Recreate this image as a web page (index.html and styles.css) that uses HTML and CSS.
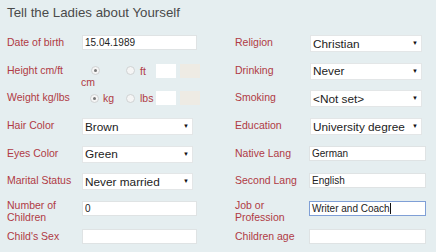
FILE: index.html
```html
<!DOCTYPE html>
<html>
<head>
    <meta charset="utf-8">
    <title>Tell the Ladies about Yourself</title>
<link rel="stylesheet" href="styles.css">
</head>
<body>
<div class="about-box">
    <h2 class="about-title">Tell the Ladies about Yourself</h2>
    <form class="about-form" name="about">
        <label class="lbl">Date of birth</label>
        <div class="fld"><input class="txt txt-left" type="text" value="15.04.1989"></div>
        <label class="lbl">Religion</label>
        <div class="fld"><div class="sel sel-right"><select><option>Christian</option></select></div></div>

        <label class="lbl">Height cm/ft</label>
        <div class="fld measure">
            <label class="opt opt-first opt-wrap"><span class="radio on"></span><span class="opt-text">cm</span></label>
            <label class="opt opt-second"><span class="radio"></span><span class="opt-text">ft</span></label>
            <span class="box"></span>
            <span class="box box-grey"></span>
        </div>
        <label class="lbl">Drinking</label>
        <div class="fld"><div class="sel sel-right"><select><option>Never</option></select></div></div>

        <label class="lbl">Weight kg/lbs</label>
        <div class="fld measure">
            <label class="opt opt-first"><span class="radio on"></span><span class="opt-text">kg</span></label>
            <label class="opt opt-second"><span class="radio"></span><span class="opt-text">lbs</span></label>
            <span class="box"></span>
            <span class="box box-grey"></span>
        </div>
        <label class="lbl">Smoking</label>
        <div class="fld"><div class="sel sel-right"><select><option>&lt;Not set&gt;</option></select></div></div>

        <label class="lbl">Hair Color</label>
        <div class="fld"><div class="sel sel-left"><select><option>Brown</option></select></div></div>
        <label class="lbl">Education</label>
        <div class="fld"><div class="sel sel-right"><select><option>University degree</option></select></div></div>

        <label class="lbl">Eyes Color</label>
        <div class="fld"><div class="sel sel-left"><select><option>Green</option></select></div></div>
        <label class="lbl">Native Lang</label>
        <div class="fld"><input class="txt txt-right" type="text" value="German"></div>

        <label class="lbl">Marital Status</label>
        <div class="fld"><div class="sel sel-left"><select><option>Never married</option></select></div></div>
        <label class="lbl">Second Lang</label>
        <div class="fld"><input class="txt txt-right" type="text" value="English"></div>

        <label class="lbl lbl-two">Number of Children</label>
        <div class="fld"><input class="txt txt-left" type="text" value="0"></div>
        <label class="lbl lbl-two">Job or Profession</label>
        <div class="fld"><div class="txt txt-right focus">Writer and Coach<span class="caret"></span></div></div>

        <label class="lbl">Child's Sex</label>
        <div class="fld"><input class="txt txt-left" type="text" value=""></div>
        <label class="lbl">Children age</label>
        <div class="fld"><input class="txt txt-right" type="text" value=""></div>
    </form>
</div>
</body>
</html>
```

FILE: styles.css
```css
* {
    margin: 0;
    padding: 0;
    box-sizing: border-box;
}
body {
    background: #e5eef0;
    font-family: "Liberation Sans", Arial, sans-serif;
}
.about-box {
    padding: 5px 0 0 7px;
    height: 252px;
    overflow: hidden;
}
.about-title {
    font-size: 13.3px;
    font-weight: normal;
    line-height: 15px;
    color: #4a4a4a;
    margin-bottom: 15px;
}
.about-form {
    display: grid;
    grid-template-columns: 75px 153px 75px 117px;
    grid-auto-rows: 27.7px;
    align-items: start;
}
.lbl {
    font-size: 10.5px;
    line-height: 12px;
    color: #b03a44;
    padding-top: 1px;
}
.lbl-two {
    padding-top: 0;
    margin-top: -2px;
    width: 60px;
}
.txt {
    display: block;
    height: 15px;
    border: 1px solid #dfe3e4;
    background: #fff;
    font-family: "Liberation Sans", Arial, sans-serif;
    font-size: 10px;
    line-height: 13px;
    color: #222;
    padding: 0 2px;
    outline: none;
}
.txt-left {
    width: 115px;
}
.txt-right {
    width: 117px;
    margin-left: -1px;
}
.txt.focus {
    border-color: #7f9fd6;
}
.caret {
    display: inline-block;
    width: 1px;
    height: 11px;
    background: #111;
    vertical-align: -2px;
}
.sel {
    position: relative;
}
.sel-left {
    width: 111px;
}
.sel-right {
    width: 112px;
}
.sel select {
    -webkit-appearance: none;
    appearance: none;
    display: block;
    width: 100%;
    height: 17px;
    border: 1px solid #e3e6e7;
    border-radius: 0;
    background: #fff;
    font-family: "Liberation Sans", Arial, sans-serif;
    font-size: 11.8px;
    color: #222;
    padding: 0 2px;
    outline: none;
}
.sel:after {
    content: "\25BC";
    position: absolute;
    right: 4px;
    top: 4px;
    font-size: 6px;
    line-height: 8px;
    color: #111;
}
.measure {
    display: flex;
    align-items: flex-start;
    padding-top: 1px;
}
.opt {
    display: flex;
    align-items: center;
    flex-wrap: wrap;
    height: 14px;
    font-size: 10.5px;
    color: #b03a44;
}
.opt-first {
    width: 44px;
}
.opt-first .radio {
    margin-left: 8px;
}
.opt-first .opt-text {
    margin-left: 4px;
}
.opt-second {
    width: 30px;
}
.opt-second .opt-text {
    margin-left: 5px;
}
.opt-wrap .opt-text {
    flex-basis: 100%;
    margin-left: -1px;
    line-height: 12px;
    margin-top: 1px;
}
.opt-wrap .radio {
    margin-left: 9px;
    margin-top: 2px;
}
.radio {
    display: inline-block;
    width: 9px;
    height: 9px;
    border-radius: 50%;
    border: 1px solid #cfd2d3;
    background: #f5f5f5;
    position: relative;
}
.radio.on:after {
    content: "";
    position: absolute;
    left: 2px;
    top: 2px;
    width: 3px;
    height: 3px;
    border-radius: 50%;
    background: #777;
}
.box {
    display: block;
    width: 20px;
    height: 14px;
    background: #fff;
}
.box-grey {
    margin-left: 4px;
    background: #eeebe4;
}
```
